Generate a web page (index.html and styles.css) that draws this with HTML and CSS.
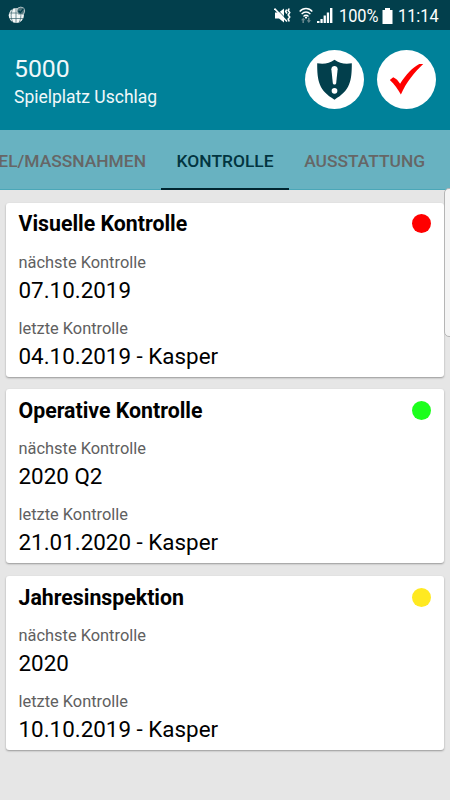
FILE: index.html
```html
<!DOCTYPE html>
<html lang="de">
<head>
    <meta charset="UTF-8">
    <meta name="viewport" content="width=device-width, initial-scale=1.0">
    <title>Spielplatz Uschlag</title>
    <link rel="stylesheet" href="styles.css">
</head>
<body>
    <div class="statusbar">
        <svg class="globe" width="18" height="18" viewBox="0 0 18 18">
            <circle cx="8.3" cy="9.5" r="7.6" fill="#f4f8f8"/>
            <path d="M8 2v15M1 7h14M1 12.5h14M4.8 2.8C2.6 7 2.6 12 4.8 16.2M11.2 2.8c2.2 4.2 2.2 9.2 0 13.4" fill="none" stroke="#38626b" stroke-width="0.7"/>
            <circle cx="12.8" cy="5" r="3.9" fill="#4c727a" stroke="#c8d5d8" stroke-width="0.8"/>
            <path d="M10.5 4.7l1.8 1.8 3.2-3.8" fill="none" stroke="#023f4c" stroke-width="1.3"/>
        </svg>
        <div class="status-right">
            <svg class="mute" width="18" height="18" viewBox="0 0 18 18">
                <path d="M1 5.5h4l5-4v14l-5-4H1z" fill="#fff"/>
                <path d="M1.5 .8l12 12.5" stroke="#023f4c" stroke-width="1"/>
                <path d="M.5 1.500l12.5 13" stroke="#fff" stroke-width="1.6"/>
                <path d="M12.7 2.500l-1 2 1.3 2M15.2 1.5l-1 2 1.5 2-1.5 2.5 1.5 2-1.5 2 1 2.5" fill="none" stroke="#fff" stroke-width="1.6"/>
            </svg>
            <svg class="wifi" width="14" height="17" viewBox="0 0 14 17">
                <path d="M.7 4.5c3.5-4 9.1-4 12.6 0M2.6 7.1c2.5-2.8 6.3-2.8 8.8 0M4.5 9.4c1.5-1.5 3.5-1.5 5 0" fill="none" stroke="#fff" stroke-width="1.4"/>
                <circle cx="7" cy="10.6" r="1.1" fill="#fff"/>
                <path d="M2 13.2l2.2-2.5 2.2 2.5H5V16H3.4v-2.8zM7.7 13.2H9v-2.5h1.6v2.5H12L9.8 16z" fill="#66858c"/>
            </svg>
            <svg class="signal" width="16" height="16" viewBox="0 0 16 16">
                <path d="M0 13h2.5v2H0zM3.4 11h2.3v4H3.4zM6.6 7.5h2.3V15H6.6zM9.8 4.5h2.3V15H9.8zM13 0h2.4v15H13z" fill="#fff"/>
            </svg>
            <span class="percent">100%</span>
            <svg class="battery" width="11" height="16" viewBox="0 0 11 16">
                <path d="M3 0h5v2h2.5v14H.5V2H3z" fill="#fff"/>
            </svg>
            <span class="clock">11:14</span>
        </div>
    </div>

    <div class="header">
        <div class="header-text">
            <div class="number">5000</div>
            <div class="place">Spielplatz Uschlag</div>
        </div>
        <div class="round-button">
            <svg width="59" height="59" viewBox="0 0 60 60">
                <path d="M30 10c-5 3.6-10.5 4.8-17.6 3.6C12.3 31 14 41.5 30 50.5c16-9 17.7-19.5 17.6-36.9C40.5 14.8 35 13.6 30 10z" fill="#023f4c"/>
                <path d="M26.8 19.5c0-4.2 6.4-4.2 6.4 0l-1.5 14.2c-.3 1.9-3.1 1.9-3.4 0z" fill="#fff"/>
                <circle cx="30" cy="41.5" r="2.9" fill="#fff"/>
            </svg>
        </div>
        <div class="round-button">
            <svg width="59" height="59" viewBox="0 0 60 60">
                <path d="M13 30.5l3.5-2.8c3.1 1.4 5 3.5 7 6.6C29 25.5 36.5 17.5 43 14.3h4C38 23 30 32.5 24.3 45.3c-3.3-5.8-6.5-10.5-11.3-14.8z" fill="#f00"/>
            </svg>
        </div>
    </div>

    <div class="tabs">
        <div class="tab tab-left">MÄNGEL/MASSNAHMEN</div>
        <div class="tab active">KONTROLLE</div>
        <div class="tab">AUSSTATTUNG</div>
    </div>

    <div class="content">
        <div class="card">
            <div class="card-title">
                <h2>Visuelle Kontrolle</h2>
                <span class="dot red"></span>
            </div>
            <div class="label">nächste Kontrolle</div>
            <div class="value">07.10.2019</div>
            <div class="label">letzte Kontrolle</div>
            <div class="value">04.10.2019 - Kasper</div>
        </div>
        <div class="card">
            <div class="card-title">
                <h2>Operative Kontrolle</h2>
                <span class="dot green"></span>
            </div>
            <div class="label">nächste Kontrolle</div>
            <div class="value">2020 Q2</div>
            <div class="label">letzte Kontrolle</div>
            <div class="value">21.01.2020 - Kasper</div>
        </div>
        <div class="card">
            <div class="card-title">
                <h2>Jahresinspektion</h2>
                <span class="dot yellow"></span>
            </div>
            <div class="label">nächste Kontrolle</div>
            <div class="value">2020</div>
            <div class="label">letzte Kontrolle</div>
            <div class="value">10.10.2019 - Kasper</div>
        </div>
    </div>

    <div class="edge-handle"></div>
</body>
</html>
```

FILE: styles.css
```css
* {
    box-sizing: border-box;
}
body {
    margin: 0;
    height: 800px;
    overflow: hidden;
    position: relative;
    font-family: Roboto, "Liberation Sans", sans-serif;
    background-color: #e6e6e6;
}
svg {
    display: block;
    flex: none;
}
.statusbar {
    display: flex;
    justify-content: space-between;
    height: 30px;
    padding: 0 11px 0 8px;
    background-color: #023f4c;
    color: #fff;
}
.globe {
    margin-top: 6px;
}
.status-right {
    display: flex;
    font-size: 18.8px;
    line-height: 32px;
}
.mute {
    margin: 7px 7px 0 0;
}
.wifi {
    margin: 7px 4px 0 0;
}
.signal {
    margin: 8px 6px 0 0;
}
.percent,
.clock {
    white-space: nowrap;
    transform: scaleX(0.87);
    transform-origin: left;
}
.percent {
    width: 41px;
}
.clock {
    width: 41px;
}
.battery {
    margin: 8px 5px 0 2px;
}
.header {
    display: flex;
    height: 100px;
    padding: 20px 14px 0 14px;
    background-color: #008199;
    color: #f0f8fa;
}
.header-text {
    flex: 1;
}
.number {
    margin-top: 4px;
    font-size: 24.8px;
    line-height: 30px;
}
.place {
    font-size: 17.5px;
    line-height: 26px;
}
.round-button {
    width: 59px;
    height: 59px;
    margin-left: 13px;
    border-radius: 50%;
    background-color: #fff;
}
.tabs {
    display: flex;
    height: 60px;
    background-color: #68b2c1;
    border-bottom: 1px solid #4ba7b8;
}
.tab {
    flex: none;
    height: 60px;
    padding: 0 15.3px;
    font-size: 17.4px;
    font-weight: 500;
    line-height: 62px;
    color: #666;
}
.tab-left {
    display: flex;
    justify-content: flex-end;
    width: 161.3px;
}
.active {
    color: #023540;
    border-bottom: 2px solid #002530;
}
.content {
    padding: 12.5px 6px 0;
}
.card {
    height: 174px;
    margin-bottom: 12.7px;
    padding: 8.8px 12.8px 0 12.5px;
    border-radius: 3px;
    background-color: #fff;
    box-shadow: 0 1px 2px rgba(0, 0, 0, 0.35);
}
.card-title {
    display: flex;
    justify-content: space-between;
    align-items: center;
    height: 26px;
    margin-bottom: 13.5px;
}
h2 {
    margin: 0;
    font-size: 21.3px;
    font-weight: bold;
    line-height: 26px;
}
.dot {
    width: 19px;
    height: 19px;
    margin-bottom: 1px;
    border-radius: 50%;
}
.red {
    background-color: #f00;
}
.green {
    background-color: #1cff1c;
}
.yellow {
    background-color: #ffe921;
}
.label {
    font-size: 16.4px;
    line-height: 24px;
    color: #606060;
}
.value {
    margin-bottom: 11px;
    font-size: 22.4px;
    line-height: 31px;
    color: #000;
}
.edge-handle {
    position: absolute;
    top: 188px;
    right: -6px;
    width: 12px;
    height: 149px;
    border: 1px solid #b5b5b5;
    border-radius: 5px;
    background-color: #f4f4f4;
}
```
